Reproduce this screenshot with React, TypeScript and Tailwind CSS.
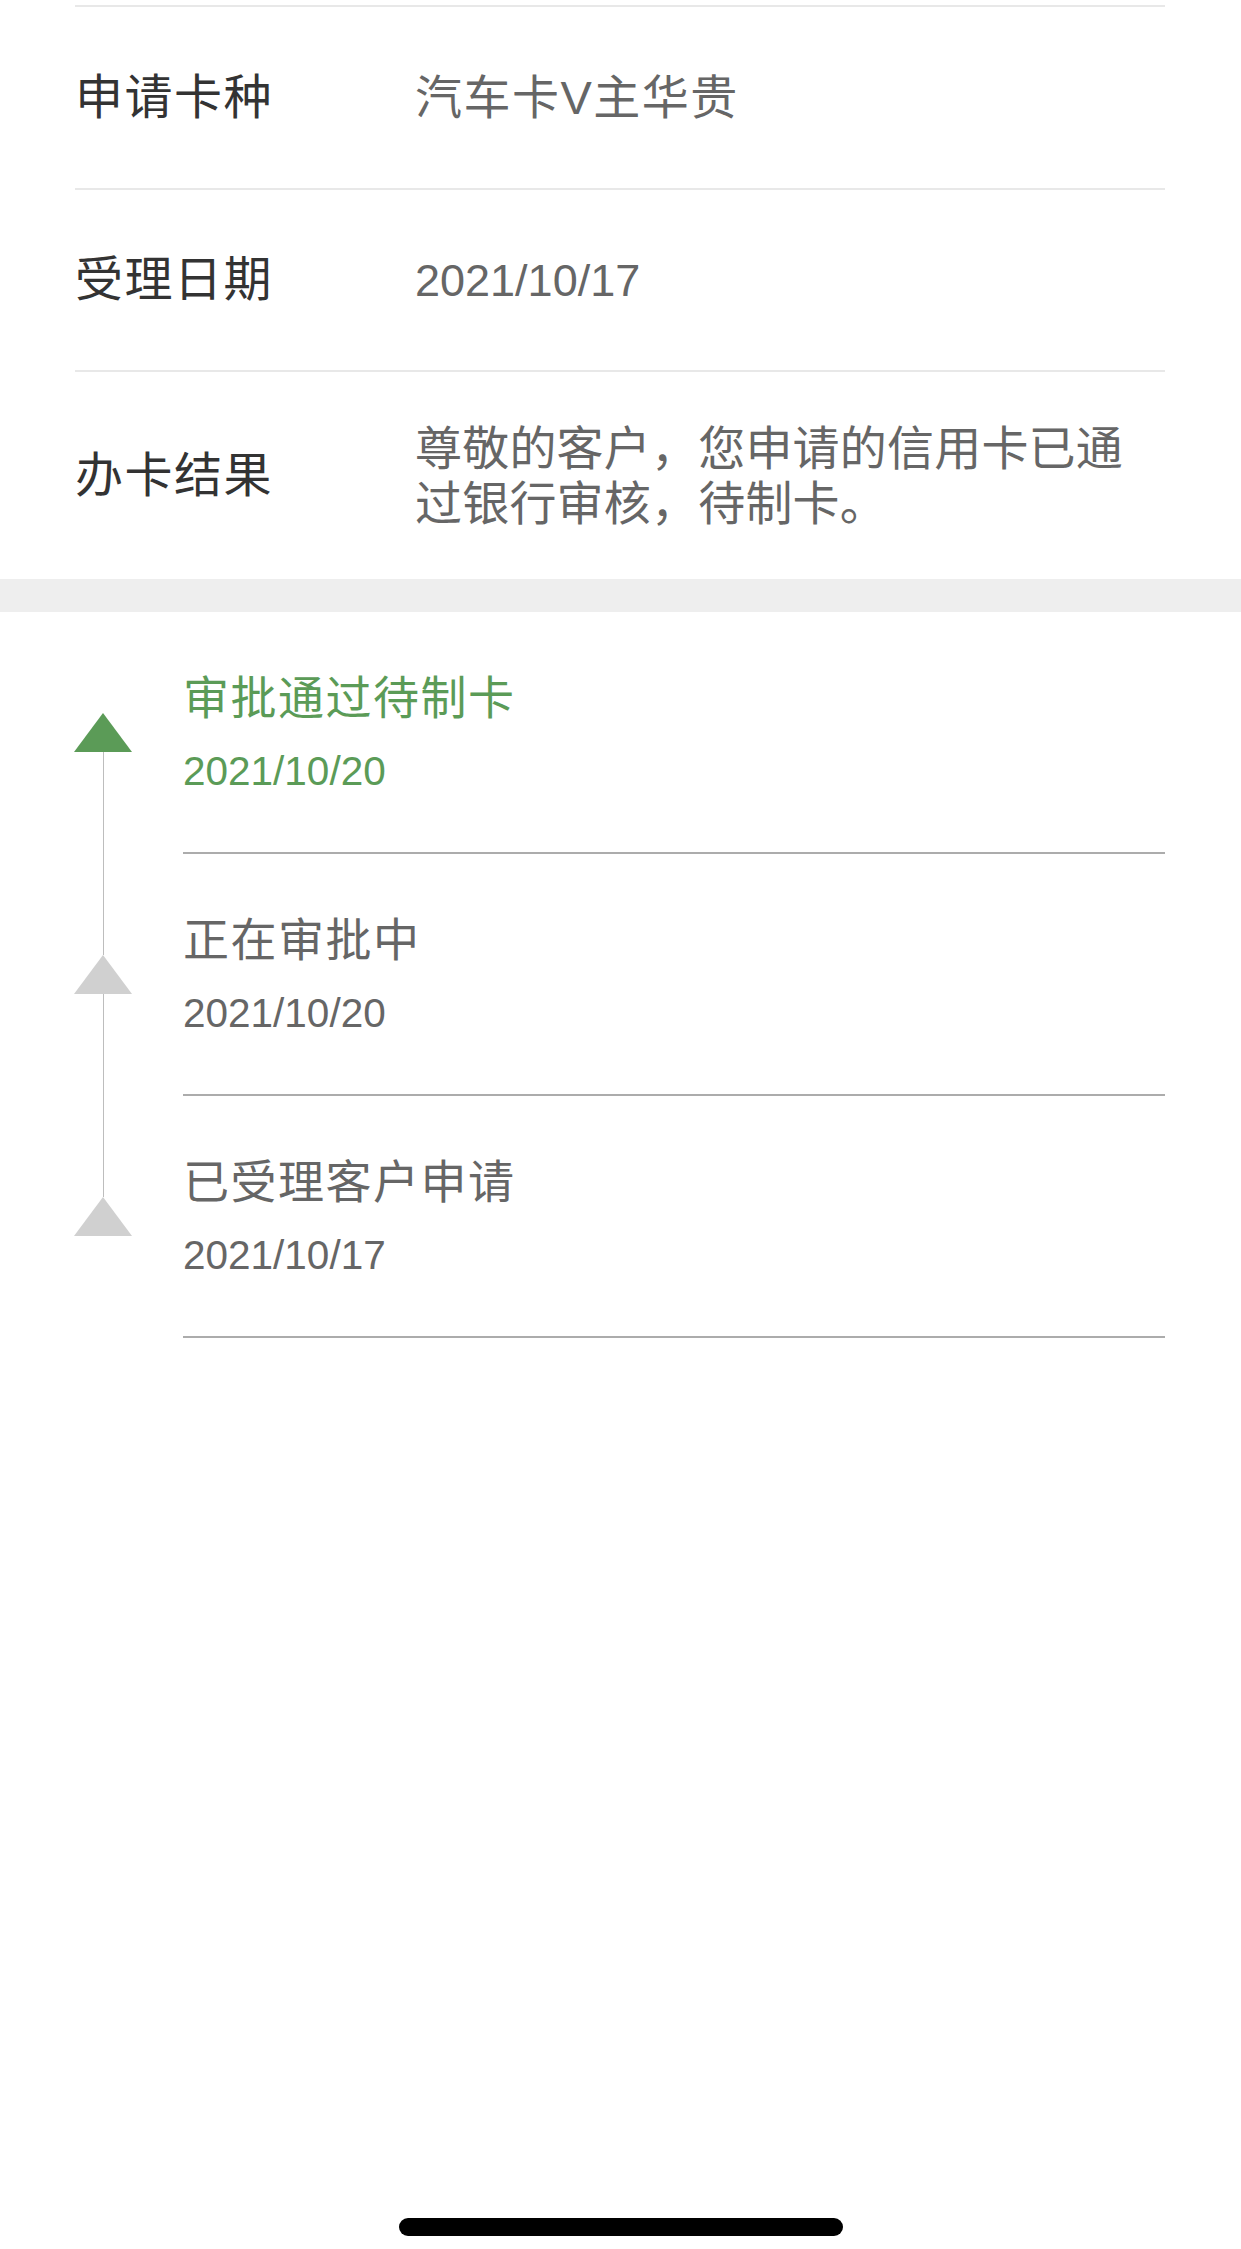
import React from "react";

interface InfoRow {
  label: string;
  value: string;
  height: string;
  valueStyle: string;
}

interface Step {
  title: string;
  date: string;
  active: boolean;
}

const rows: InfoRow[] = [
  {
    label: "申请卡种",
    value: "汽车卡V主华贵",
    height: "h-[183px]",
    valueStyle: "text-[47px] tracking-[1.5px]",
  },
  {
    label: "受理日期",
    value: "2021/10/17",
    height: "h-[182px]",
    valueStyle: "text-[45px]",
  },
  {
    label: "办卡结果",
    value: "尊敬的客户，您申请的信用卡已通过银行审核，待制卡。",
    height: "h-[209px]",
    valueStyle: "text-[47px] tracking-[0.2px]",
  },
];

const steps: Step[] = [
  { title: "审批通过待制卡", date: "2021/10/20", active: true },
  { title: "正在审批中", date: "2021/10/20", active: false },
  { title: "已受理客户申请", date: "2021/10/17", active: false },
];

function Marker({ active }: { active: boolean }) {
  return (
    <svg width="58" height="39" viewBox="0 0 58 39" className="shrink-0 block">
      <polygon points="29,0 58,39 0,39" fill={active ? "#5b9b57" : "#d0d0d0"} />
    </svg>
  );
}

function StepItem({ step, first, last }: { step: Step; first: boolean; last: boolean }) {
  return (
    <div className="flex h-[242px]">
      {/* Rail */}
      <div className="ml-[74px] w-[58px] flex flex-col items-center">
        <div className={`h-[101px] w-px ${first ? "" : "bg-[#bdbdbd]"}`} />
        <Marker active={step.active} />
        <div className={`flex-1 w-px ${last ? "" : "bg-[#bdbdbd]"}`} />
      </div>

      {/* Content */}
      <div className="ml-[51px] mr-[76px] flex-1 flex flex-col pt-[60px] border-b-2 border-[#acacac]">
        <p
          className={`text-[46px] tracking-[1.5px] leading-[52px] whitespace-nowrap ${
            step.active ? "text-[#5b9b57]" : "text-[#666666]"
          }`}
        >
          {step.title}
        </p>
        <p
          className={`mt-[23px] text-[40.5px] leading-[48px] ${
            step.active ? "text-[#5b9b57]" : "text-[#666666]"
          }`}
        >
          {step.date}
        </p>
      </div>
    </div>
  );
}

export default function App() {
  return (
    <div className="min-h-[2249px] w-full bg-white flex flex-col font-['Liberation_Sans','Noto_Sans_CJK_SC',sans-serif]">
      {/* Application details */}
      <section className="pt-[5px] ml-[75px] mr-[76px]">
        {rows.map((row) => (
          <div
            key={row.label}
            className={`flex items-center border-t-2 border-[#e8e8e8] ${row.height}`}
          >
            <span className="w-[340px] shrink-0 text-[48px] tracking-[1.5px] leading-[56px] text-[#333333]">
              {row.label}
            </span>
            <span className={`flex-1 leading-[55px] text-[#666666] ${row.valueStyle}`}>
              {row.value}
            </span>
          </div>
        ))}
      </section>

      {/* Separator band */}
      <div className="h-[33px] bg-[#eeeeee]" />

      {/* Progress timeline */}
      <section>
        {steps.map((step, i) => (
          <StepItem key={i} step={step} first={i === 0} last={i === steps.length - 1} />
        ))}
      </section>

      {/* Home indicator */}
      <div className="mt-auto mb-[13px] self-center w-[444px] h-[18px] rounded-full bg-black" />
    </div>
  );
}
